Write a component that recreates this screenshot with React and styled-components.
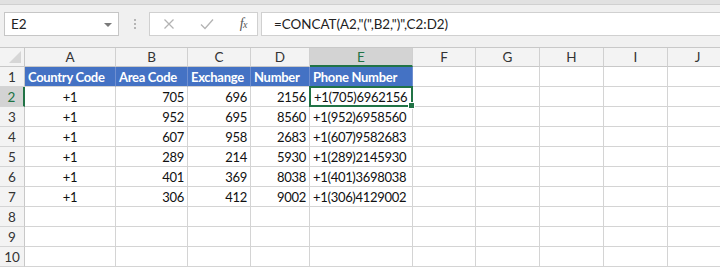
import React from "react";
import styled, { createGlobalStyle } from "styled-components";

const GlobalStyle = createGlobalStyle`
  html, body {
    margin: 0;
    padding: 0;
    background: #ffffff;
    overflow: hidden;
  }
  body {
    font-family: Lato, "Liberation Sans", sans-serif;
  }
`;

const COLS = [
  { name: "A", width: 91 },
  { name: "B", width: 72 },
  { name: "C", width: 63 },
  { name: "D", width: 59 },
  { name: "E", width: 103 },
  { name: "F", width: 63 },
  { name: "G", width: 64 },
  { name: "H", width: 64 },
  { name: "I", width: 64 },
  { name: "J", width: 60 },
];

const HEADERS = ["Country Code", "Area Code", "Exchange", "Number", "Phone Number"];

const DATA = [
  ["+1", "705", "696", "2156"],
  ["+1", "952", "695", "8560"],
  ["+1", "607", "958", "2683"],
  ["+1", "289", "214", "5930"],
  ["+1", "401", "369", "8038"],
  ["+1", "306", "412", "9002"],
];

const Page = styled.div`
  width: 720px;
  height: 267px;
  overflow: hidden;
  background: #ffffff;
`;

const Ribbon = styled.div`
  height: 4px;
  background: #e1e1e1;
  border-bottom: 1px solid #d0d0d0;
`;

const FormulaBar = styled.div`
  display: flex;
  align-items: center;
  height: 42px;
  padding: 7px 0 11px 4px;
  background: #f0f0f0;
  box-sizing: border-box;
`;

const NameBox = styled.div`
  display: flex;
  align-items: center;
  justify-content: space-between;
  width: 115px;
  height: 24px;
  box-sizing: border-box;
  background: #ffffff;
  border: 1px solid #c6c6c6;
  padding: 0 6px 0 6px;
  font-size: 13.5px;
  color: #222;
`;

const Arrow = styled.span`
  width: 0;
  height: 0;
  border-left: 4px solid transparent;
  border-right: 4px solid transparent;
  border-top: 4px solid #7a7a7a;
  margin-top: 1px;
`;

const Grip = styled.div`
  display: flex;
  flex-direction: column;
  gap: 2px;
  margin: 0 13px 0 15px;
  span {
    width: 2px;
    height: 2px;
    background: #b5b5b5;
  }
`;

const ActionBox = styled.div`
  display: flex;
  align-items: center;
  justify-content: space-between;
  width: 109px;
  height: 24px;
  box-sizing: border-box;
  background: #ffffff;
  border: 1px solid #d0d0d0;
  padding: 0 10px 0 13px;
  margin-right: 3px;
`;

const Fx = styled.span`
  font-family: "Liberation Serif", serif;
  font-style: italic;
  font-size: 14px;
  color: #555;
  letter-spacing: -0.5px;
  sub {
    font-size: 10px;
    vertical-align: baseline;
  }
`;

const FormulaInput = styled.div`
  flex: 1;
  height: 24px;
  box-sizing: border-box;
  background: #ffffff;
  border: 1px solid #d0d0d0;
  border-right: none;
  padding: 0 0 0 12px;
  display: flex;
  align-items: center;
  font-size: 13.4px;
  color: #222;
  white-space: nowrap;
`;

const Sheet = styled.div`
  display: grid;
  grid-template-columns: 25px ${COLS.map((c) => `${c.width}px`).join(" ")};
  grid-template-rows: 19px repeat(10, 20px);
  border-top: 1px solid #c8c8c8;
`;

const Corner = styled.div`
  background: #f3f3f3;
  border-right: 1px solid #c8c8c8;
  border-bottom: 1px solid #c8c8c8;
  position: relative;
  &::after {
    content: "";
    position: absolute;
    right: 3px;
    bottom: 3px;
    width: 0;
    height: 0;
    border-left: 12px solid transparent;
    border-bottom: 12px solid #d6d6d6;
  }
`;

const ColHead = styled.div`
  display: flex;
  align-items: center;
  justify-content: center;
  font-size: 13.5px;
  color: ${(p) => (p.$active ? "#217346" : "#333")};
  background: ${(p) => (p.$active ? "#d3d3d3" : "#f3f3f3")};
  border-right: 1px solid #d0d0d0;
  border-bottom: ${(p) => (p.$active ? "2px solid #217346" : "1px solid #c8c8c8")};
  box-sizing: border-box;
`;

const RowHead = styled.div`
  display: flex;
  align-items: center;
  justify-content: center;
  font-size: 13.5px;
  color: ${(p) => (p.$active ? "#217346" : "#333")};
  background: ${(p) => (p.$active ? "#d3d3d3" : "#f3f3f3")};
  border-right: ${(p) => (p.$active ? "2px solid #217346" : "1px solid #c8c8c8")};
  border-bottom: 1px solid #d4d4d4;
  box-sizing: border-box;
`;

const Cell = styled.div`
  display: flex;
  align-items: center;
  justify-content: ${(p) => p.$align || "flex-start"};
  padding: 0 3px 0 3px;
  font-size: 13px;
  letter-spacing: -0.3px;
  color: #111;
  white-space: nowrap;
  box-sizing: border-box;
  border-right: 1px solid #d4d4d4;
  border-bottom: 1px solid #d4d4d4;
`;

const HeadCell = styled(Cell)`
  background: #4472c4;
  color: #ffffff;
  font-weight: 700;
  border-right: 1px solid #6f8fd0;
  overflow: hidden;
`;

const SelectedCell = styled(Cell)`
  position: relative;
  border: 2px solid #217346;
  margin: -1px 0 0 -1px;
  padding-left: 3px;
  &::after {
    content: "";
    position: absolute;
    right: -4px;
    bottom: -4px;
    width: 5px;
    height: 5px;
    background: #217346;
    border: 1px solid #ffffff;
  }
`;

const ALIGN = ["center", "flex-end", "flex-end", "flex-end"];

export default function App() {
  return (
    <Page>
      <GlobalStyle />
      <Ribbon />
      <FormulaBar>
        <NameBox>
          <span>E2</span>
          <Arrow />
        </NameBox>
        <Grip>
          <span />
          <span />
          <span />
        </Grip>
        <ActionBox>
          <svg width="12" height="12" viewBox="0 0 12 12">
            <path d="M1.5 1.5 L10.5 10.5 M10.5 1.5 L1.5 10.5" stroke="#b3b3b3" strokeWidth="1.3" fill="none" />
          </svg>
          <svg width="14" height="12" viewBox="0 0 14 12">
            <path d="M1 6.5 L5 10.5 L13 1.5" stroke="#b3b3b3" strokeWidth="1.3" fill="none" />
          </svg>
          <Fx>
            f<sub>x</sub>
          </Fx>
        </ActionBox>
        <FormulaInput>=CONCAT(A2,"(",B2,")",C2:D2)</FormulaInput>
      </FormulaBar>
      <Sheet>
        <Corner />
        {COLS.map((c) => (
          <ColHead key={c.name} $active={c.name === "E"}>
            {c.name}
          </ColHead>
        ))}

        <RowHead>1</RowHead>
        {COLS.map((c, i) =>
          i < HEADERS.length ? (
            <HeadCell key={c.name}>{HEADERS[i]}</HeadCell>
          ) : (
            <Cell key={c.name} />
          )
        )}

        {DATA.map((row, r) => {
          const phone = `${row[0]}(${row[1]})${row[2]}${row[3]}`;
          return (
            <React.Fragment key={r}>
              <RowHead $active={r === 0}>{r + 2}</RowHead>
              {row.map((v, i) => (
                <Cell key={i} $align={ALIGN[i]}>
                  {v}
                </Cell>
              ))}
              {r === 0 ? <SelectedCell>{phone}</SelectedCell> : <Cell>{phone}</Cell>}
              {COLS.slice(5).map((c) => (
                <Cell key={c.name} />
              ))}
            </React.Fragment>
          );
        })}

        {[8, 9, 10].map((n) => (
          <React.Fragment key={n}>
            <RowHead>{n}</RowHead>
            {COLS.map((c) => (
              <Cell key={c.name} />
            ))}
          </React.Fragment>
        ))}
      </Sheet>
    </Page>
  );
}
